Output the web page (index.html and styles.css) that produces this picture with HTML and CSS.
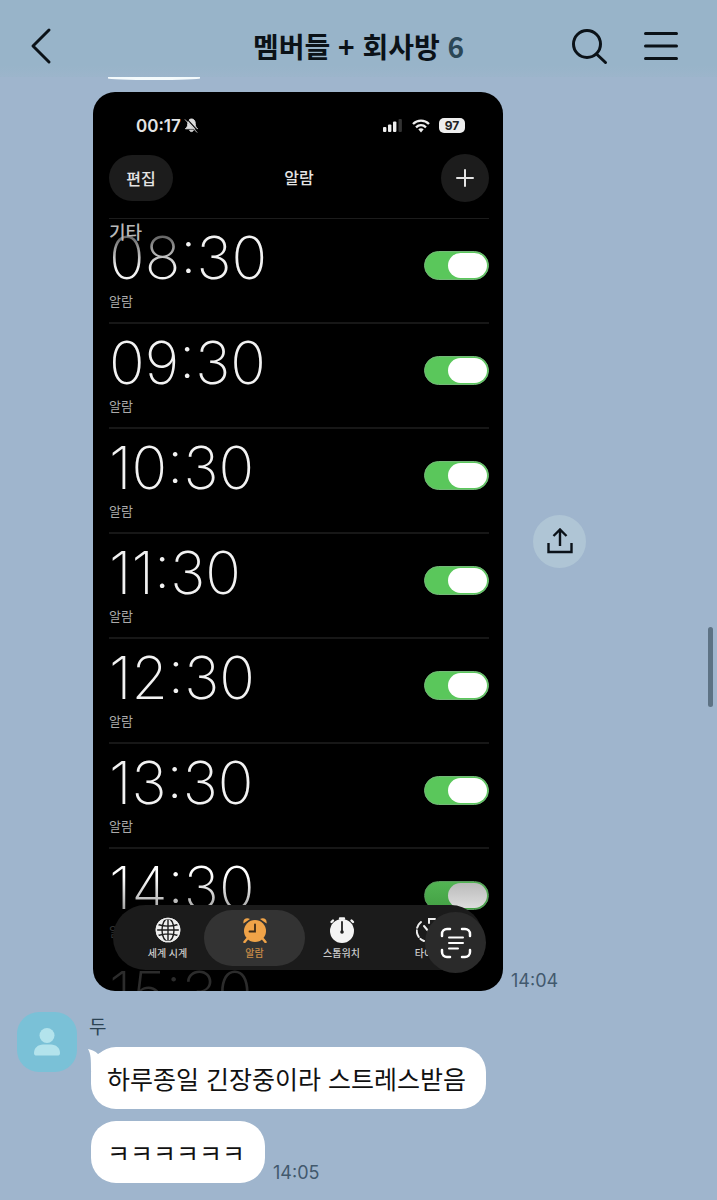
FILE: index.html
```html
<!DOCTYPE html>
<html lang="ko">
<head>
<meta charset="utf-8">
<meta name="viewport" content="width=device-width, initial-scale=1">
<title>멤버들 + 회사방</title>
<link rel="stylesheet" href="styles.css">
</head>
<body>
<header class="topbar">
  <button class="icon-btn" type="button" aria-label="뒤로">
    <svg width="24" height="40" viewBox="0 0 24 40"><path d="M21 4 5 20 21 36" fill="none" stroke="currentColor" stroke-width="3" stroke-linecap="round" stroke-linejoin="round"/></svg>
  </button>
  <h1 class="room">멤버들 + 회사방 <span class="count">6</span></h1>
  <div class="actions">
    <button class="icon-btn" type="button" aria-label="검색">
      <svg width="38" height="38" viewBox="0 0 38 38" fill="none" stroke="currentColor" stroke-width="3" stroke-linecap="round"><circle cx="16" cy="17" r="13.500"/><path d="M25.500 27 34.500 35.500"/></svg>
    </button>
    <button class="icon-btn" type="button" aria-label="메뉴">
      <svg width="36" height="30" viewBox="0 0 36 30" stroke="currentColor" stroke-width="3" stroke-linecap="round"><path d="M2.500 2.500h31M2.500 15h31M2.500 27.500h31"/></svg>
    </button>
  </div>
</header>

<main class="chat">
  <div class="previous"></div>

  <section class="photo-row">
    <div class="phone">
      <div class="status">
        <span class="clock">00:17
          <svg width="15" height="15" viewBox="0 0 16 16"><path d="M8 1C5 1 4 3.500 4 6c0 3-1 4-2.500 5.500h13C13 10 12 9 12 6c0-2.500-1-5-4-5zM6 13h4c-.5 2-3.500 2-4 0z" fill="#ddd" stroke="#ddd"/><path d="M3 1 16 15" stroke="#000" stroke-width="1.200"/><path d="M1 1.500 14 15.500" stroke="#ccc" stroke-width="1"/></svg>
        </span>
        <span class="signals">
          <svg width="20" height="13" viewBox="0 0 20 13"><g fill="#eee"><rect x="0" y="8" width="3.400" height="5" rx="1"/><rect x="5" y="5.500" width="3.400" height="7.500" rx="1"/><rect x="10" y="2.500" width="3.400" height="10.500" rx="1"/></g><rect x="15.500" width="3.400" height="13" rx="1" fill="#333"/></svg>
          <svg width="18" height="14" viewBox="0 0 18 14" fill="none" stroke="#eee" stroke-width="2.300"><path d="M1 5c4.500-4.500 11.500-4.500 16 0"/><path d="M4 8.300c3-2.800 7-2.800 10 0"/><path d="M6.300 10.300c1.600-1.300 3.800-1.300 5.400 0L9 13.500z" fill="#eee" stroke="none"/></svg>
          <span class="battery">97</span>
        </span>
      </div>
      <div class="nav">
        <button class="edit" type="button">편집</button>
        <h2 class="nav-title">알람</h2>
        <button class="add" type="button" aria-label="추가"><svg width="18" height="18" viewBox="0 0 18 18" stroke="currentColor" stroke-width="2" stroke-linecap="round"><path d="M9 1v16M1 9h16"/></svg></button>
      </div>
      <div class="list">
        <h3 class="group">기타</h3>
        <label class="alarm"><span class="info"><span class="time"><span class="faded">08</span>:30</span><span class="name">알람</span></span><input class="toggle" type="checkbox" checked></label>
        <label class="alarm"><span class="info"><span class="time">09:30</span><span class="name">알람</span></span><input class="toggle" type="checkbox" checked></label>
        <label class="alarm"><span class="info"><span class="time">10:30</span><span class="name">알람</span></span><input class="toggle" type="checkbox" checked></label>
        <label class="alarm"><span class="info"><span class="time">11:30</span><span class="name">알람</span></span><input class="toggle" type="checkbox" checked></label>
        <label class="alarm"><span class="info"><span class="time">12:30</span><span class="name">알람</span></span><input class="toggle" type="checkbox" checked></label>
        <label class="alarm"><span class="info"><span class="time">13:30</span><span class="name">알람</span></span><input class="toggle" type="checkbox" checked></label>
        <label class="alarm dim"><span class="info"><span class="time">14:30</span><span class="name">알람</span></span><input class="toggle" type="checkbox" checked></label>
        <div class="alarm peek"><span class="time">15:30</span></div>
      </div>
      <nav class="tabs">
        <button class="tab" type="button">
          <svg width="26" height="26" viewBox="0 0 26 26"><circle cx="13" cy="13" r="12.300" fill="#eee"/><g fill="none" stroke="#1c1c1c" stroke-width="1.400"><path d="M13 1v24M1 13h24M3 7.500c6 2 14 2 20 0M3 18.500c6-2 14-2 20 0"/><ellipse cx="13" cy="13" rx="6" ry="11.500"/></g><circle cx="13" cy="13" r="11.600" fill="none" stroke="#eee" stroke-width="1.500"/></svg>
          <span>세계 시계</span>
        </button>
        <button class="tab active" type="button">
          <svg width="26" height="26" viewBox="0 0 26 26"><g fill="#f0a348"><circle cx="13" cy="14" r="11"/><path d="M1.500 6.500C.5 2 4.500 0 8 2zM24.500 6.500C25.500 2 21.500 0 18 2z"/></g><path d="m5 22-2.500 3M21 22l2.500 3" stroke="#f0a348" stroke-width="2.500" stroke-linecap="round"/><path d="M13 7.500V14.500H7.500" fill="none" stroke="#3a2a18" stroke-width="1.800" stroke-linecap="round"/></svg>
          <span>알람</span>
        </button>
        <button class="tab" type="button">
          <svg width="26" height="26" viewBox="0 0 26 26"><circle cx="13" cy="14" r="12" fill="#f4f4f4"/><path d="M11 1.500h4M22.500 3.500l1.500 1.500M2.500 5l1.500-1.500" stroke="#f4f4f4" stroke-width="2.400" stroke-linecap="round"/><path d="M13 5v9" stroke="#222" stroke-width="1.800" stroke-linecap="round"/><circle cx="13" cy="15" r="1.800" fill="#222"/></svg>
          <span>스톱워치</span>
        </button>
        <button class="tab" type="button">
          <svg width="26" height="26" viewBox="0 0 26 26" fill="none" stroke="#eee" stroke-width="2" stroke-linecap="round"><path d="M5 5A11 11 0 0 0 8 24" stroke-dasharray="7 2.500"/><path d="M13 6V2h6M8 9l5 6"/></svg>
          <span>타이머</span>
        </button>
      </nav>
      <button class="scan" type="button" aria-label="텍스트 인식">
        <svg width="32" height="32" viewBox="0 0 32 32" fill="none" stroke="#fff" stroke-width="2.500" stroke-linecap="round"><path d="M2 9V7a5 5 0 0 1 5-5h3M22 2h3a5 5 0 0 1 5 5v2M30 23v2a5 5 0 0 1-5 5h-3M10 30H7a5 5 0 0 1-5-5v-2"/><path d="M9 10.500h14M9 16h14M9 21.500h9" stroke-width="2"/></svg>
      </button>
    </div>
    <div class="side">
      <button class="share" type="button" aria-label="공유"><svg width="26" height="28" viewBox="0 0 26 28" fill="none" stroke="currentColor" stroke-width="2.400"><path d="M1.500 15v9h23v-9M13 18V2M6.500 8 13 1.500 19.500 8"/></svg></button>
      <time class="stamp">14:04</time>
    </div>
  </section>

  <section class="message">
    <div class="avatar"><svg width="26" height="28" viewBox="0 0 26 28" fill="#b3e3ec"><circle cx="13" cy="7.500" r="7.500"/><path d="M0 25c0-5 4-8.500 9-8.500h8c5 0 9 3.500 9 8.500 0 2-1 2.500-2.500 2.500h-21C1 27.500 0 27 0 25z"/></svg></div>
    <div class="thread">
      <span class="sender">두</span>
      <p class="bubble first"><svg class="tail" width="16" height="24" viewBox="0 0 16 24"><path d="M0 2c4 1 7 2 10 5L16 4V24H3C3 13 3 7 0 2z" fill="#fff"/></svg>하루종일 긴장중이라 스트레스받음</p>
      <div class="line"><p class="bubble">ㅋㅋㅋㅋㅋㅋ</p><time class="stamp">14:05</time></div>
    </div>
  </section>
  <div class="scroll-thumb"></div>
</main>
</body>
</html>
```
FILE: styles.css
```css
* { box-sizing: border-box; }
body {
  margin: 0;
  min-height: 100vh;
  background: #9fb5cd;
  color: #0b1218;
  font-family: Inter, "Noto Sans CJK KR", sans-serif;
}
button { border: 0; padding: 0; background: none; color: inherit; font: inherit; display: grid; place-items: center; }
h1, h2, h3, p { margin: 0; }
svg { display: block; }

.topbar {
  display: grid;
  grid-template-columns: 1fr auto 1fr;
  align-items: center;
  height: 77px;
  padding: 14px 38px 0 28px;
  background: linear-gradient(#98b4c9 85%, #9cb5cb);
}
.topbar > .icon-btn { justify-self: start; }
.room { font: 700 28px/40px "Noto Sans CJK KR", sans-serif; padding: 0 0 0 10px; }
.count { color: #2b4757; }
.actions { display: flex; align-items: center; justify-content: flex-end; gap: 34px; }

.chat { padding: 0 17px 18px; }
.previous { width: 92px; height: 3px; margin-left: 91px; border-radius: 0 0 50% 50%; background: #f4fafc; }
.photo-row { display: flex; margin: 12px 0 0 76px; }

.phone {
  position: relative;
  flex: 0 1 410px;
  height: 899px;
  padding: 20px 14px 0 16px;
  overflow: hidden;
  border-radius: 22px;
  background: #000;
  color: #e4e4e4;
}
.status { display: flex; justify-content: space-between; align-items: center; height: 27px; padding: 0 24px 0 27px; }
.clock { display: flex; align-items: center; gap: 3px; font-size: 17px; font-weight: 600; }
.signals { display: flex; align-items: center; gap: 9px; }
.battery { width: 26px; border-radius: 5px; background: #eee; color: #222; font-size: 12px; font-weight: 700; line-height: 15px; text-align: center; }
.nav { display: grid; grid-template-columns: 1fr auto 1fr; align-items: center; margin-top: 15px; height: 48px; }
.edit { width: 64px; height: 46px; border-radius: 23px; background: #1c1c1c; font-size: 16px; font-weight: 500; }
.nav-title { font-size: 16px; font-weight: 500; line-height: 24px; }
.add { justify-self: end; width: 48px; height: 48px; border-radius: 50%; background: #1c1c1c; }

.list { position: relative; margin-top: 16px; border-top: 1px solid #1c1c1c; }
.group { position: absolute; top: 1px; left: 0; z-index: 1; font-size: 18px; font-weight: 500; line-height: 26px; color: #b8b8b8; }
.alarm { display: flex; justify-content: space-between; align-items: flex-start; height: 105px; padding-top: 11px; border-bottom: 2px solid #171717; }
.info { display: flex; flex-direction: column; gap: 5px; }
.time { font-size: 59px; font-weight: 250; line-height: 56px; color: #f2f2f2; }
.faded { background: linear-gradient(#555 15%, #f2f2f2 65%); background-clip: text; color: transparent; }
.name { font-size: 13px; line-height: 20px; color: #aaa; }
.toggle {
  appearance: none;
  display: flex;
  justify-content: flex-end;
  width: 65px;
  height: 29px;
  margin: 21px 0 0;
  padding: 1px;
  border: 1px solid #74b978;
  border-radius: 15px;
  background: #5ac75b;
}
.toggle::before { content: ""; width: 39px; height: 25px; border-radius: 13px; background: #fff; }
.dim .time { background: linear-gradient(#fff 30%, #999 95%); background-clip: text; color: transparent; }
.dim .toggle { background: linear-gradient(#52b453, #43a044); border-color: #5a9b5d; }
.dim .toggle::before { background: linear-gradient(#bbb, #ddd); }
.dim .name { color: #333; }
.dim { border-color: #000; }
.peek { border: 0; }
.peek .time { color: #2c2c2c; }

.tabs {
  position: absolute;
  left: 20px;
  right: 20px;
  bottom: 21px;
  display: grid;
  grid-template-columns: repeat(4, 1fr);
  height: 65px;
  padding: 5px 11px 4px;
  border-radius: 33px;
  background: #1b1b1b;
}
.tab { display: flex; flex-direction: column; align-items: center; gap: 2px; padding-top: 7px; font-size: 10px; line-height: 16px; color: #ccc; font-weight: 500; white-space: nowrap; }
.active { margin: 0 -7px; border-radius: 28px; background: #333; color: #c98d48; }
.scan { position: absolute; right: 17px; bottom: 18px; width: 61px; height: 61px; border-radius: 50%; background: #2a2a2a; }

.side { display: flex; flex-direction: column; justify-content: space-between; padding-left: 8px; }
.share { width: 53px; height: 53px; margin: auto 0 auto 22px; border-radius: 50%; background: #afc5d5; }
.side .stamp { margin-top: -20px; }
.stamp { font-size: 18px; line-height: 20px; color: #42596d; }

.message { display: flex; gap: 12px; margin-top: 21px; }
.avatar { display: grid; place-items: center; flex: none; width: 60px; height: 60px; border-radius: 22px; background: #7ac1d7; }
.thread { display: flex; flex-direction: column; align-items: flex-start; }
.sender { padding-top: 2px; font-size: 19px; line-height: 28px; color: #2c4354; }
.bubble { position: relative; padding: 13px 20px 13px 16px; border-radius: 25px; background: #fff; color: #111; font: 400 25px/36px "Noto Sans CJK KR", sans-serif; }
.first { margin: 5px 0 12px; }
.first, .line { margin-left: 2px; }
.tail { position: absolute; top: 0; left: -3px; }
.line { display: flex; align-items: flex-end; gap: 8px; }
.scroll-thumb { position: absolute; right: 4px; top: 627px; width: 5px; height: 80px; border-radius: 3px; background: #5d7284; }
```
